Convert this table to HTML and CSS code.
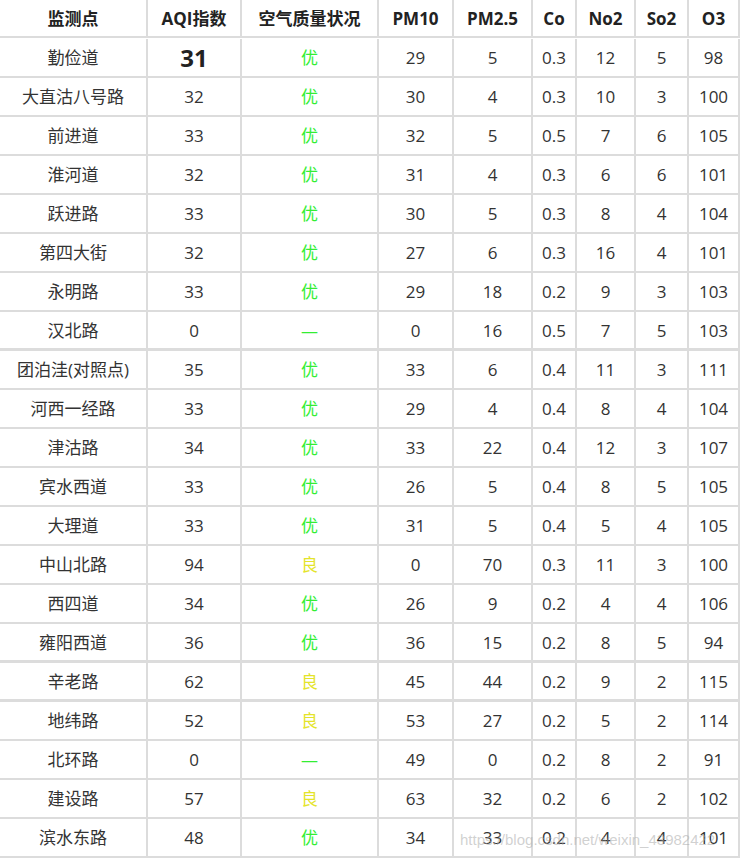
FILE: index.html
```html
<!DOCTYPE html>
<html lang="zh">
<head>
<meta charset="utf-8">
<link rel="stylesheet" href="styles.css">
</head>
<body>
<div class="wrap">
<div class="grid">
  <div class="c h">监测点</div><div class="c h">AQI指数</div><div class="c h">空气质量状况</div><div class="c h">PM10</div><div class="c h">PM2.5</div><div class="c h">Co</div><div class="c h">No2</div><div class="c h">So2</div><div class="c h">O3</div>

  <div class="c">勤俭道</div><div class="c big">31</div><div class="c g">优</div><div class="c">29</div><div class="c">5</div><div class="c">0.3</div><div class="c">12</div><div class="c">5</div><div class="c">98</div>
  <div class="c">大直沽八号路</div><div class="c">32</div><div class="c g">优</div><div class="c">30</div><div class="c">4</div><div class="c">0.3</div><div class="c">10</div><div class="c">3</div><div class="c">100</div>
  <div class="c">前进道</div><div class="c">33</div><div class="c g">优</div><div class="c">32</div><div class="c">5</div><div class="c">0.5</div><div class="c">7</div><div class="c">6</div><div class="c">105</div>
  <div class="c">淮河道</div><div class="c">32</div><div class="c g">优</div><div class="c">31</div><div class="c">4</div><div class="c">0.3</div><div class="c">6</div><div class="c">6</div><div class="c">101</div>
  <div class="c">跃进路</div><div class="c">33</div><div class="c g">优</div><div class="c">30</div><div class="c">5</div><div class="c">0.3</div><div class="c">8</div><div class="c">4</div><div class="c">104</div>
  <div class="c">第四大街</div><div class="c">32</div><div class="c g">优</div><div class="c">27</div><div class="c">6</div><div class="c">0.3</div><div class="c">16</div><div class="c">4</div><div class="c">101</div>
  <div class="c">永明路</div><div class="c">33</div><div class="c g">优</div><div class="c">29</div><div class="c">18</div><div class="c">0.2</div><div class="c">9</div><div class="c">3</div><div class="c">103</div>
  <div class="c t">汉北路</div><div class="c t">0</div><div class="c t g">—</div><div class="c t">0</div><div class="c t">16</div><div class="c t">0.5</div><div class="c t">7</div><div class="c t">5</div><div class="c t">103</div>
  <div class="c">团泊洼(对照点)</div><div class="c">35</div><div class="c g">优</div><div class="c">33</div><div class="c">6</div><div class="c">0.4</div><div class="c">11</div><div class="c">3</div><div class="c">111</div>
  <div class="c">河西一经路</div><div class="c">33</div><div class="c g">优</div><div class="c">29</div><div class="c">4</div><div class="c">0.4</div><div class="c">8</div><div class="c">4</div><div class="c">104</div>
  <div class="c">津沽路</div><div class="c">34</div><div class="c g">优</div><div class="c">33</div><div class="c">22</div><div class="c">0.4</div><div class="c">12</div><div class="c">3</div><div class="c">107</div>
  <div class="c">宾水西道</div><div class="c">33</div><div class="c g">优</div><div class="c">26</div><div class="c">5</div><div class="c">0.4</div><div class="c">8</div><div class="c">5</div><div class="c">105</div>
  <div class="c">大理道</div><div class="c">33</div><div class="c g">优</div><div class="c">31</div><div class="c">5</div><div class="c">0.4</div><div class="c">5</div><div class="c">4</div><div class="c">105</div>
  <div class="c">中山北路</div><div class="c">94</div><div class="c y">良</div><div class="c">0</div><div class="c">70</div><div class="c">0.3</div><div class="c">11</div><div class="c">3</div><div class="c">100</div>
  <div class="c">西四道</div><div class="c">34</div><div class="c g">优</div><div class="c">26</div><div class="c">9</div><div class="c">0.2</div><div class="c">4</div><div class="c">4</div><div class="c">106</div>
  <div class="c t">雍阳西道</div><div class="c t">36</div><div class="c t g">优</div><div class="c t">36</div><div class="c t">15</div><div class="c t">0.2</div><div class="c t">8</div><div class="c t">5</div><div class="c t">94</div>
  <div class="c t">辛老路</div><div class="c t">62</div><div class="c t y">良</div><div class="c t">45</div><div class="c t">44</div><div class="c t">0.2</div><div class="c t">9</div><div class="c t">2</div><div class="c t">115</div>
  <div class="c">地纬路</div><div class="c">52</div><div class="c y">良</div><div class="c">53</div><div class="c">27</div><div class="c">0.2</div><div class="c">5</div><div class="c">2</div><div class="c">114</div>
  <div class="c">北环路</div><div class="c">0</div><div class="c g">—</div><div class="c">49</div><div class="c">0</div><div class="c">0.2</div><div class="c">8</div><div class="c">2</div><div class="c">91</div>
  <div class="c">建设路</div><div class="c">57</div><div class="c y">良</div><div class="c">63</div><div class="c">32</div><div class="c">0.2</div><div class="c">6</div><div class="c">2</div><div class="c">102</div>
  <div class="c">滨水东路</div><div class="c">48</div><div class="c g">优</div><div class="c">34</div><div class="c">33</div><div class="c">0.2</div><div class="c">4</div><div class="c">4</div><div class="c">101</div>
</div>
<div class="wm">https://blog.csdn.net/weixin_43982422</div>
</div>
</body>
</html>
```

FILE: styles.css
```css
html, body {
  margin: 0;
  padding: 0;
  background: #fff;
}
body {
  font-family: "Open Sans", "Noto Sans CJK SC", sans-serif;
  font-size: 17px;
  color: #333;
  overflow: hidden;
}
.wrap {
  position: relative;
  width: 740px;
  height: 858px;
  overflow: hidden;
}
.grid {
  display: grid;
  grid-template-columns: 148px 94px 137px 75px 79px 44px 59px 53px 51px;
  grid-auto-rows: 39px;
}
.c {
  box-sizing: border-box;
  border-right: 2px solid #dcdcdc;
  border-bottom: 2px solid #dcdcdc;
  display: flex;
  align-items: center;
  justify-content: center;
  white-space: nowrap;
  line-height: 1;
}
.c.t {
  border-bottom-width: 3px;
}
.h {
  height: 38px;
  font-weight: bold;
  color: #222;
}
.grid > .h {
  align-self: start;
}
.big {
  font-size: 24px;
  font-weight: bold;
  color: #222;
}
.g { color: #33ee33; }
.y { color: #e4e42a; }
.wm {
  position: absolute;
  left: 460px;
  top: 831px;
  font-family: "Liberation Sans", Arial, sans-serif;
  font-size: 15px;
  color: rgba(170, 170, 170, 0.55);
  white-space: nowrap;
}
```
